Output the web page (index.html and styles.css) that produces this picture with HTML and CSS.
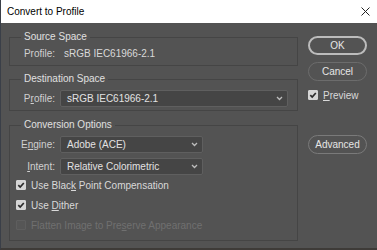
FILE: index.html
```html
<!DOCTYPE html>
<html lang="en">

<head>
    <meta charset="UTF-8">
    <title>Convert to Profile</title>
    <link rel="stylesheet" href="styles.css">
</head>

<body>

    <div class="dialog">
        <div class="titlebar">
            <span class="title">Convert to Profile</span>
            <svg class="close" width="9" height="9" viewBox="0 0 9 9">
                <path d="M0.5 0.5 L8.5 8.5 M8.5 0.5 L0.5 8.5" stroke="#222" stroke-width="1" fill="none" />
            </svg>
        </div>

        <div class="content">
            <div class="groups">
                <fieldset class="group source">
                    <legend>Source Space</legend>
                    <div class="row">
                        <span class="label">Profile:</span>
                        <span class="value">sRGB IEC61966-2.1</span>
                    </div>
                </fieldset>

                <fieldset class="group dest">
                    <legend>Destination Space</legend>
                    <div class="row">
                        <span class="label">P<u>r</u>ofile:</span>
                        <div class="select wide">
                            <span>sRGB IEC61966-2.1</span>
                            <svg class="chev" width="7" height="5" viewBox="0 0 7 5">
                                <path d="M1 1 L3.5 3.5 L6 1" stroke="#bdbdbd" stroke-width="1.3" fill="none" />
                            </svg>
                        </div>
                    </div>
                </fieldset>

                <fieldset class="group options">
                    <legend>Conversion Options</legend>
                    <div class="row">
                        <span class="label">E<u>n</u>gine:</span>
                        <div class="select">
                            <span>Adobe (ACE)</span>
                            <svg class="chev" width="7" height="5" viewBox="0 0 7 5">
                                <path d="M1 1 L3.5 3.5 L6 1" stroke="#bdbdbd" stroke-width="1.3" fill="none" />
                            </svg>
                        </div>
                    </div>
                    <div class="row gap">
                        <span class="label"><u>I</u>ntent:</span>
                        <div class="select">
                            <span>Relative Colorimetric</span>
                            <svg class="chev" width="7" height="5" viewBox="0 0 7 5">
                                <path d="M1 1 L3.5 3.5 L6 1" stroke="#bdbdbd" stroke-width="1.3" fill="none" />
                            </svg>
                        </div>
                    </div>
                    <div class="check">
                        <span class="box on">
                            <svg width="10" height="10" viewBox="0 0 10 10"><path d="M2.3 5.2 L4.2 7 L7.8 3" stroke="#2b2b2b" stroke-width="1.7" fill="none" /></svg>
                        </span>
                        <span>Use Blac<u>k</u> Point Compensation</span>
                    </div>
                    <div class="check">
                        <span class="box on">
                            <svg width="10" height="10" viewBox="0 0 10 10"><path d="M2.3 5.2 L4.2 7 L7.8 3" stroke="#2b2b2b" stroke-width="1.7" fill="none" /></svg>
                        </span>
                        <span>Use <u>D</u>ither</span>
                    </div>
                    <div class="check disabled">
                        <span class="box"></span>
                        <span>Flatten Image to Pre<u>s</u>erve Appearance</span>
                    </div>
                </fieldset>
            </div>

            <div class="buttons">
                <div class="btn default">OK</div>
                <div class="btn cancel">Cancel</div>
                <div class="check preview">
                    <span class="box on">
                        <svg width="10" height="10" viewBox="0 0 10 10"><path d="M2.3 5.2 L4.2 7 L7.8 3" stroke="#2b2b2b" stroke-width="1.7" fill="none" /></svg>
                    </span>
                    <span><u>P</u>review</span>
                </div>
                <div class="btn advanced">Advanced</div>
            </div>
        </div>
    </div>

</body>

</html>
```

FILE: styles.css
```css
body {
    margin: 0;
    padding: 0;
    background-color: #535353;
    font-family: "Liberation Sans", Arial, sans-serif;
    font-size: 10px;
    color: #d9d9d9;
}

.dialog {
    height: 250px;
    box-sizing: border-box;
    border-left: 1px solid #3a3f48;
    border-bottom: 2px solid #3e3b38;
    display: flex;
    flex-direction: column;
}

.titlebar {
    height: 23px;
    flex-shrink: 0;
    background-color: #ffffff;
    color: #000;
    display: flex;
    align-items: center;
    justify-content: space-between;
    padding: 0 7px 0 6px;
    font-size: 10px;
}

.close {
    display: block;
    margin-top: -1px;
}

.content {
    display: flex;
    gap: 10px;
    padding: 6px 0 0 8px;
}

.groups {
    width: 289px;
    display: flex;
    flex-direction: column;
    gap: 5px;
}

.group {
    margin: 0;
    padding: 3px 8px 3px 11px;
    border: 1px solid #454545;
    min-width: 0;
}

.group legend {
    padding: 0 3px;
    line-height: 16px;
    color: #e0e0e0;
}

.source {
    padding-top: 1px;
}

.options {
    margin-top: 1px;
    padding-bottom: 5px;
}

.row {
    display: flex;
    align-items: center;
    gap: 5px;
}

.row.gap {
    margin-top: 5px;
}

.label {
    width: 34px;
    text-align: right;
    line-height: 16px;
    color: #d0d0d0;
}

.value {
    padding-left: 4px;
    line-height: 16px;
}

u {
    text-underline-offset: 1px;
}

.select {
    box-sizing: border-box;
    height: 17px;
    width: 143px;
    background-color: #454545;
    border: 1px solid #5f5f5f;
    border-radius: 2px;
    display: flex;
    align-items: center;
    justify-content: space-between;
    padding: 0 4px 0 6px;
    color: #e2e2e2;
}

.select.wide {
    width: 228px;
}

.chev {
    display: block;
}

.check {
    display: flex;
    align-items: center;
    gap: 5px;
    height: 20px;
    margin-left: -5px;
}

.box {
    box-sizing: border-box;
    width: 10px;
    height: 10px;
    border-radius: 1px;
    background-color: #565656;
    border: 1px solid #5e5e5e;
    display: block;
}

.box svg {
    display: block;
    margin: -1px;
}

.box.on {
    background-color: #d6d6d6;
    border-color: #d6d6d6;
}

.check.disabled {
    color: #707070;
}

.buttons {
    width: 59px;
    padding-top: 7px;
    display: flex;
    flex-direction: column;
}

.btn {
    box-sizing: border-box;
    height: 19px;
    border: 1px solid #7a7a7a;
    border-radius: 10px;
    display: flex;
    align-items: center;
    justify-content: center;
    color: #e6e6e6;
}

.btn.default {
    border: 2px solid #bcbcbc;
}

.btn.cancel {
    margin-top: 7px;
    border-color: #6c6c6c;
}

.check.preview {
    margin: 6px 0 0 0;
    height: 16px;
    gap: 5px;
}

.btn.advanced {
    margin-top: 32px;
}
```
